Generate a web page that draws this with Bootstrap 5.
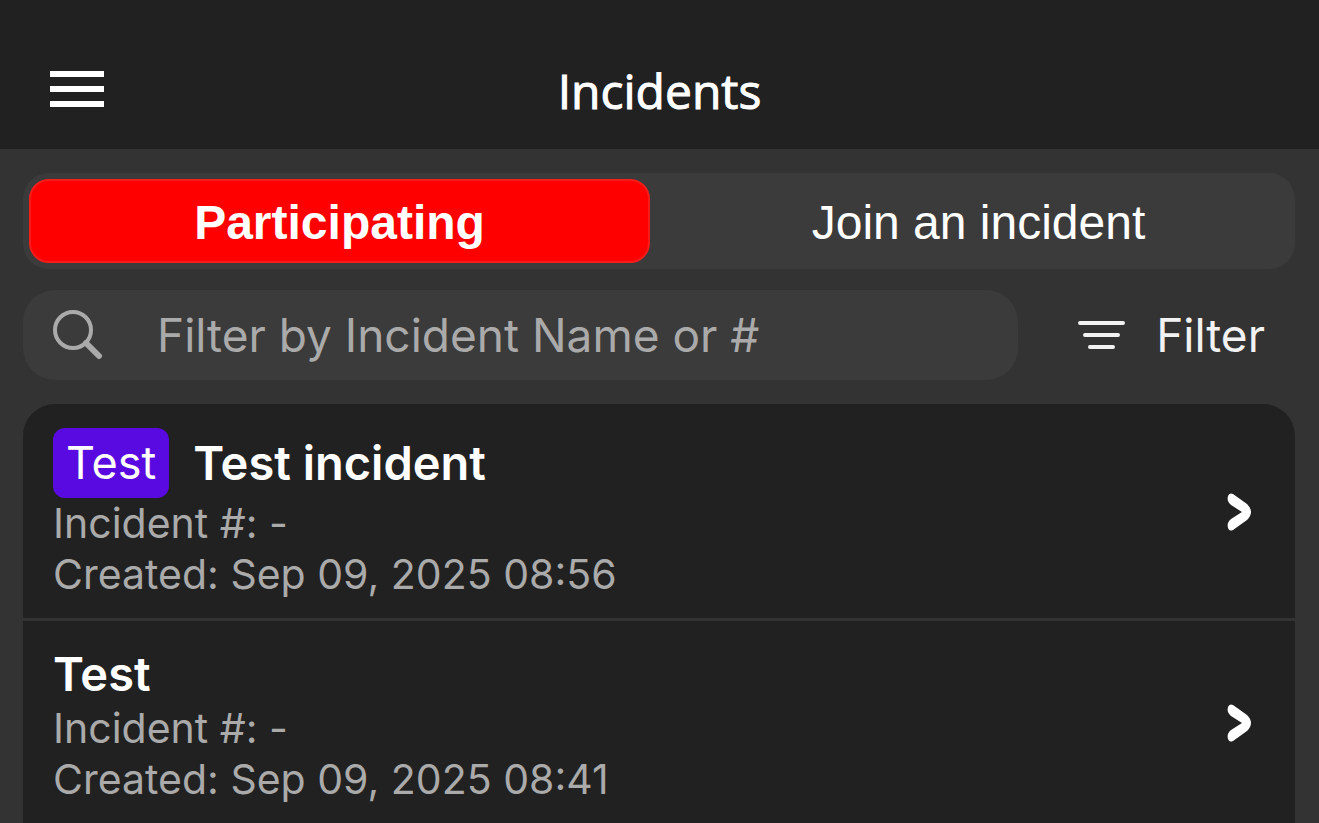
<!DOCTYPE html>
<html lang="en" data-bs-theme="dark">
<head>
<meta charset="utf-8">
<meta name="viewport" content="width=device-width, initial-scale=1">
<title>Incidents</title>
<link rel="stylesheet" href="https://cdn.jsdelivr.net/npm/bootstrap@5.3.0/dist/css/bootstrap.min.css">
<style>
  body { background: #333; color: #fff; font-family: Inter, "Liberation Sans", sans-serif; font-size: 46px; line-height: 60px; }
  .app-bar { background: #212121; padding: 49px 50px 20px; display: grid; grid-template-columns: 1fr auto 1fr; align-items: center; }
  .app-title { padding-top: 4px; font: 500 48px/76px "Open Sans", "Noto Sans", sans-serif; -webkit-text-stroke: 1px #fff; }
  .menu-btn { line-height: 0; }
  .content-area { padding: 24px 24px 0 23px; }
  .segments { background: #3b3b3b; border-radius: 26px; padding: 6px; gap: 18px; margin-bottom: 21px; }
  .segments .nav-link { flex: 1 1 0; padding: 4px 0 0; border: 2px solid transparent; border-radius: 20px; color: #fff; font: 400 48px/76px "Liberation Sans", Arial, sans-serif; }
  .segments .nav-link.active { background: #f00; border-color: #f51d1a; font-weight: 700; }
  .search-box { background: #3b3b3b; border-radius: 32px; height: 90px; padding: 0 30px; gap: 54px; color: #aaa; }
  .search-box .form-control { font-size: 46px; line-height: 60px; color: #fff; }
  .search-box .form-control::placeholder { color: #aaa; opacity: 1; }
  .filter-btn { color: #f2f2f2; font-size: 46px; line-height: 60px; gap: 31px; padding: 0 30px 0 59px; }
  .incident-list { margin-top: 24px; border-radius: 32px 32px 0 0; }
  .incident { background: #212121; color: #fff; padding: 24px 43px 18px 30px; border-bottom: 3px solid #333; }
  .incident:hover { color: #fff; }
  .incident svg { margin-bottom: 4px; }
  .incident-name { font-size: 47px; line-height: 58px; font-weight: 600; }
  .incident-tag { background: #590ae0; border-radius: 12px; padding: 6px 13px; margin-right: 24px; font-size: 45px; font-weight: 400; }
  .incident-meta { color: #aaa; font-size: 41px; line-height: 51px; }
</style>
</head>
<body class="vh-100 overflow-hidden d-flex flex-column">
  <header class="app-bar flex-shrink-0">
    <button type="button" class="menu-btn btn p-0 border-0 text-start" aria-label="Menu">
      <svg width="54" height="36" viewBox="0 0 54 36" fill="#fff"><path d="M0 0h54v6H0zM0 15h54v6H0zM0 30h54v6H0z"/></svg>
    </button>
    <h1 class="app-title mb-0">Incidents</h1>
  </header>

  <main class="content-area d-flex flex-column flex-grow-1 overflow-hidden">
    <div class="segments nav nav-pills flex-nowrap flex-shrink-0" role="tablist">
      <button type="button" class="nav-link active" role="tab" aria-selected="true" data-bs-toggle="pill">Participating</button>
      <button type="button" class="nav-link" role="tab" aria-selected="false" data-bs-toggle="pill">Join an incident</button>
    </div>

    <form class="d-flex align-items-center flex-shrink-0" role="search">
      <label class="search-box d-flex align-items-center flex-grow-1">
        <svg class="flex-shrink-0" width="50" height="50" viewBox="0 0 50 50" fill="none" stroke="currentColor"><circle cx="20" cy="20" r="18" stroke-width="4"/><path d="M33 33l13 13" stroke-width="6" stroke-linecap="round"/></svg>
        <input type="text" class="form-control bg-transparent border-0 p-0 shadow-none" placeholder="Filter by Incident Name or #" aria-label="Filter by Incident Name or #">
      </label>
      <button type="button" class="filter-btn btn border-0 d-flex align-items-center flex-shrink-0">
        <svg width="48" height="30" viewBox="0 0 48 30" fill="none" stroke="currentColor" stroke-width="4" stroke-linecap="round"><path d="M3 3h43M8 15h33M13 27h23"/></svg>
        Filter
      </button>
    </form>

    <div class="incident-list flex-grow-1 overflow-hidden">
      <a href="#" class="incident d-flex align-items-center justify-content-between text-decoration-none">
        <div>
          <div class="incident-name d-flex align-items-center"><span class="incident-tag">Test</span>Test incident</div>
          <div class="incident-meta">Incident #: -</div>
          <div class="incident-meta">Created: Sep 09, 2025 08:56</div>
        </div>
        <svg class="flex-shrink-0" width="25" height="38" viewBox="0 0 25 38" fill="#fff"><path d="M6 1Q3 -.5 1.500 2Q0 5 1 8Q2 10.500 4 12L15 19L4 26Q2 27.500 1 30Q0 33 1.500 36Q3 38.500 6 37L20 27Q24 23 24 19Q24 15 20 11Z"/></svg>
      </a>
      <a href="#" class="incident d-flex align-items-center justify-content-between text-decoration-none">
        <div>
          <div class="incident-name">Test</div>
          <div class="incident-meta">Incident #: -</div>
          <div class="incident-meta">Created: Sep 09, 2025 08:41</div>
        </div>
        <svg class="flex-shrink-0" width="25" height="38" viewBox="0 0 25 38" fill="#fff"><path d="M6 1Q3 -.5 1.500 2Q0 5 1 8Q2 10.500 4 12L15 19L4 26Q2 27.500 1 30Q0 33 1.500 36Q3 38.500 6 37L20 27Q24 23 24 19Q24 15 20 11Z"/></svg>
      </a>
    </div>
  </main>
<script src="https://cdn.jsdelivr.net/npm/bootstrap@5.3.0/dist/js/bootstrap.bundle.min.js"></script>
</body>
</html>
